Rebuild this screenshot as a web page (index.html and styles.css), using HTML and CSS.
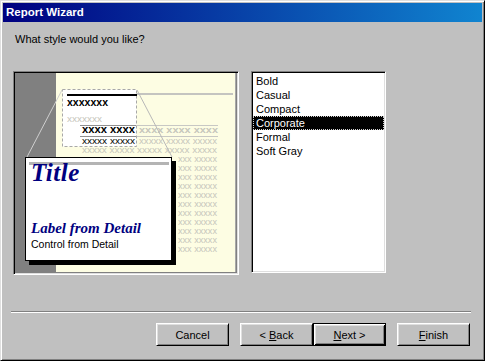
FILE: index.html
```html
<!DOCTYPE html>
<html>
<head>
<meta charset="utf-8">
<link rel="stylesheet" href="styles.css">
</head>
<body>
<div class="window">
  <div class="titlebar">Report Wizard</div>
  <div class="content">
    <p class="prompt">What style would you like?</p>
    <div class="main">
      <div class="preview sunken">
        <svg class="preview-art" width="222" height="200" viewBox="15 73 222 200" xmlns="http://www.w3.org/2000/svg">
          <rect x="15" y="73" width="222" height="200" fill="#808080"/>
          <rect x="56" y="73" width="179" height="199" fill="#fdfde3"/>
          <line x1="235.5" y1="73" x2="235.5" y2="272" stroke="#a8a8a8"/>
          <rect x="137" y="93" width="96" height="2" fill="#c4c4c0"/>
          <line x1="80" x2="218" y1="125.5" y2="125.5" stroke="#c8c8c4"/>
          <line x1="80" x2="218" y1="136.5" y2="136.5" stroke="#c8c8c4"/>
          <text class="hx" x="139" y="133" textLength="79" lengthAdjust="spacingAndGlyphs">xxxx xxxx xxxx</text>
          <text class="lx" x="139" y="144" textLength="78" lengthAdjust="spacingAndGlyphs">xxxxx xxxxx xxxxx</text>
          <text class="lx" x="82" y="153" textLength="135" lengthAdjust="spacingAndGlyphs">xxxxx xxxxx xxxxx xxxxx xxxxx</text>
          <text class="lx" x="178" y="162" textLength="39" lengthAdjust="spacingAndGlyphs">xxx xxxxx</text>
          <text class="lx" x="178" y="171" textLength="39" lengthAdjust="spacingAndGlyphs">xxx xxxxx</text>
          <text class="lx" x="178" y="180" textLength="39" lengthAdjust="spacingAndGlyphs">xxx xxxxx</text>
          <text class="lx" x="178" y="189" textLength="39" lengthAdjust="spacingAndGlyphs">xxx xxxxx</text>
          <text class="lx" x="178" y="198" textLength="39" lengthAdjust="spacingAndGlyphs">xxx xxxxx</text>
          <text class="lx" x="178" y="207" textLength="39" lengthAdjust="spacingAndGlyphs">xxx xxxxx</text>
          <text class="lx" x="178" y="216" textLength="39" lengthAdjust="spacingAndGlyphs">xxx xxxxx</text>
          <text class="lx" x="178" y="225" textLength="39" lengthAdjust="spacingAndGlyphs">xxx xxxxx</text>
          <text class="lx" x="178" y="234" textLength="39" lengthAdjust="spacingAndGlyphs">xxx xxxxx</text>
          <text class="lx" x="178" y="243" textLength="39" lengthAdjust="spacingAndGlyphs">xxx xxxxx</text>
          <text class="lx" x="178" y="252" textLength="39" lengthAdjust="spacingAndGlyphs">xxx xxxxx</text>

          <rect x="62.5" y="89.5" width="74" height="57" fill="#ffffff" stroke="#a8a8a8" stroke-dasharray="3 2"/>
          <rect x="67" y="94" width="70" height="2" fill="#000"/>
          <text class="bx" x="67" y="106" textLength="41" lengthAdjust="spacingAndGlyphs">xxxxxxx</text>
          <text class="lx" x="67" y="122" textLength="35" lengthAdjust="spacingAndGlyphs">xxxxxxx</text>
          <line x1="80" x2="136" y1="125.5" y2="125.5" stroke="#909090"/>
          <line x1="80" x2="136" y1="136.5" y2="136.5" stroke="#909090"/>
          <text class="bx" x="82" y="133" textLength="53" lengthAdjust="spacingAndGlyphs">xxxx xxxx</text>
          <text class="rx" x="82" y="144" textLength="53" lengthAdjust="spacingAndGlyphs">xxxxx xxxxx</text>

          <line x1="62" y1="90" x2="27" y2="157" stroke="#cfcfcf"/>
          <line x1="137" y1="90" x2="172" y2="157" stroke="#b8b8b8"/>

          <rect x="29" y="161" width="147" height="104" fill="#000"/>
          <rect x="25.5" y="157.5" width="146" height="103" fill="#fff" stroke="#000"/>
          <rect x="29" y="162" width="140" height="3" fill="#b4b4b4"/>
          <text class="card-title" x="31" y="181">Title</text>
          <text class="card-label" x="31" y="233">Label from Detail</text>
          <text class="card-control" x="31" y="248">Control from Detail</text>
        </svg>
      </div>
      <ul class="list sunken">
        <li>Bold</li>
        <li>Casual</li>
        <li>Compact</li>
        <li class="selected">Corporate</li>
        <li>Formal</li>
        <li>Soft Gray</li>
      </ul>
    </div>
    <div class="separator"></div>
    <div class="buttons">
      <button class="btn">Cancel</button>
      <div class="btn-pair">
        <button class="btn">&lt; <u>B</u>ack</button>
        <button class="btn default"><u>N</u>ext &gt;</button>
      </div>
      <button class="btn"><u>F</u>inish</button>
    </div>
  </div>
</div>
</body>
</html>
```

FILE: styles.css
```css
html, body {
  margin: 0;
  padding: 0;
  background: #c0c0c0;
}

body {
  width: 485px;
  height: 361px;
  overflow: hidden;
  font-family: "Liberation Sans", Arial, sans-serif;
  font-size: 11px;
  color: #000;
}

.window {
  box-sizing: border-box;
  width: 485px;
  height: 361px;
  background: #c0c0c0;
  border: 1px solid;
  border-color: #dfdfdf #000 #000 #dfdfdf;
  box-shadow: inset 1px 1px #fff, inset -1px -1px #808080;
  padding: 2px;
  display: flex;
  flex-direction: column;
}

.titlebar {
  height: 19px;
  line-height: 19px;
  padding-left: 3px;
  background: linear-gradient(to right, #000080, #1084d0);
  color: #fff;
  font-weight: bold;
  font-size: 11.5px;
}

.content {
  display: flex;
  flex-direction: column;
  flex: 1;
}

.prompt {
  margin: 11px 0 0 12px;
  line-height: 13px;
}

.main {
  display: flex;
  align-items: flex-start;
  gap: 12px;
  margin-top: 25px;
  padding-left: 10px;
}

.sunken {
  box-sizing: border-box;
  border: 1px solid;
  border-color: #808080 #fff #fff #808080;
  box-shadow: inset 1px 1px #000, inset -1px -1px #dfdfdf;
  padding: 1px;
}

.preview {
  width: 226px;
  height: 204px;
  background: #808080;
}

.preview-art {
  display: block;
}

.preview-art .lx {
  font: 9px "Liberation Sans", Arial, sans-serif;
  fill: #c6c6bc;
}

.preview-art .hx {
  font: bold 9px "Liberation Sans", Arial, sans-serif;
  fill: #c6c6bc;
}

.preview-art .bx {
  font: bold 10px "Liberation Sans", Arial, sans-serif;
  fill: #000;
}

.preview-art .rx {
  font: 9.5px "Liberation Sans", Arial, sans-serif;
  fill: #000;
}

.preview-art .card-title {
  font: italic bold 25px "Liberation Serif", "Times New Roman", serif;
  fill: #000080;
  letter-spacing: 0.5px;
}

.preview-art .card-label {
  font: italic bold 15px "Liberation Serif", "Times New Roman", serif;
  fill: #000080;
}

.preview-art .card-control {
  font: 10.5px "Liberation Sans", Arial, sans-serif;
  fill: #000;
}

.list {
  width: 135px;
  height: 202px;
  margin: 0;
  padding: 2px 1px 1px 1px;
  list-style: none;
  background: #fff;
}

.list li {
  height: 14px;
  line-height: 14px;
  padding-left: 3px;
  white-space: nowrap;
}

.list li.selected {
  background: #000;
  color: #fff;
  outline: 1px dotted #cfcfcf;
  outline-offset: -1px;
}

.separator {
  margin: 36px 0 0 8px;
  width: 460px;
  height: 0;
  border-top: 1px solid #808080;
  border-bottom: 1px solid #fff;
}

.buttons {
  display: flex;
  justify-content: flex-end;
  gap: 11px;
  margin-top: 10px;
  padding-right: 12px;
}

.btn-pair {
  display: flex;
}

.btn {
  box-sizing: border-box;
  width: 73px;
  height: 23px;
  padding: 0;
  margin: 0;
  background: #c0c0c0;
  border: 1px solid;
  border-color: #fff #000 #000 #fff;
  box-shadow: inset 1px 1px #dfdfdf, inset -1px -1px #808080;
  font-family: "Liberation Sans", Arial, sans-serif;
  font-size: 11px;
  color: #000;
  text-align: center;
}

.btn u {
  text-decoration: underline;
  text-underline-offset: 1px;
}

.btn.default {
  border-color: #000;
  box-shadow: inset 1px 1px #fff, inset -1px -1px #000, inset 2px 2px #dfdfdf, inset -2px -2px #808080;
}
```
